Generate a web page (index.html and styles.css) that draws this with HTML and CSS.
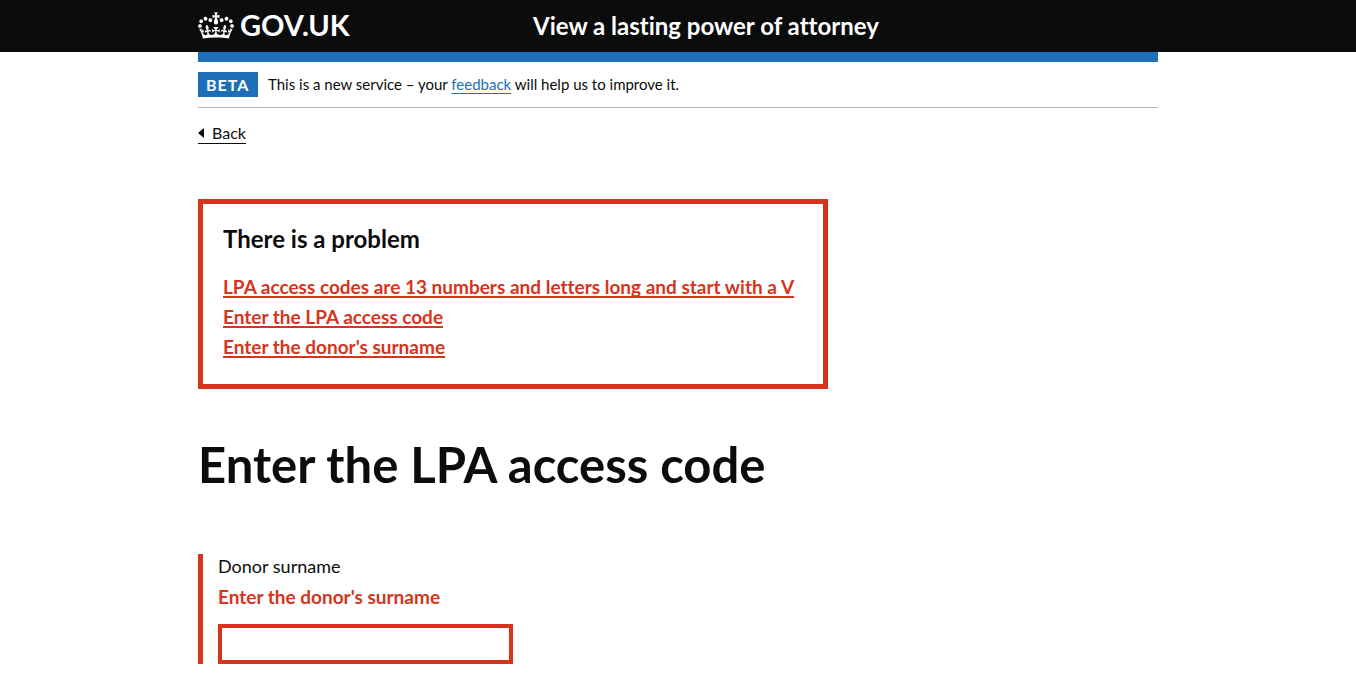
FILE: index.html
```
<!DOCTYPE html>
<html lang="en">
<head>
<meta charset="utf-8">
<meta name="viewport" content="width=device-width, initial-scale=1">
<title>Enter the LPA access code - View a lasting power of attorney</title>
<link rel="stylesheet" href="styles.css">
</head>
<body>
<header class="header">
  <div class="container header-row">
    <a class="logo" href="#">
      <svg class="crown" viewBox="0 0 132 97" width="36" height="27" aria-hidden="true"><path fill="currentColor" fill-rule="evenodd" d="M25 30.2c3.5 1.5 7.7-.2 9.1-3.7 1.5-3.6-.2-7.8-3.9-9.2-3.6-1.4-7.6.3-9.1 3.9-1.4 3.5.3 7.5 3.9 9zM9 39.5c3.6 1.5 7.8-.2 9.2-3.7 1.5-3.6-.2-7.8-3.9-9.1-3.6-1.5-7.6.2-9.1 3.8-1.4 3.5.3 7.5 3.8 9zM4.4 57.2c3.5 1.5 7.7-.2 9.1-3.8 1.5-3.6-.2-7.7-3.9-9.1-3.5-1.5-7.6.3-9.1 3.8-1.4 3.5.3 7.6 3.9 9.1zm38.3-21.4c3.5 1.5 7.7-.2 9.1-3.8 1.5-3.6-.2-7.7-3.9-9.1-3.6-1.5-7.6.3-9.1 3.8-1.3 3.6.4 7.7 3.9 9.1zm64.4-5.6c-3.6 1.5-7.8-.2-9.1-3.7-1.5-3.6.2-7.8 3.8-9.2 3.6-1.4 7.7.3 9.2 3.9 1.3 3.5-.4 7.5-3.9 9zm15.9 9.3c-3.6 1.5-7.7-.2-9.1-3.7-1.5-3.6.2-7.8 3.7-9.1 3.6-1.5 7.7.2 9.2 3.8 1.5 3.5-.3 7.5-3.8 9zm4.7 17.7c-3.6 1.5-7.8-.2-9.2-3.8-1.5-3.6.2-7.7 3.9-9.1 3.6-1.5 7.7.3 9.2 3.8 1.3 3.5-.4 7.6-3.9 9.1zM89.3 35.8c-3.6 1.5-7.8-.2-9.2-3.8-1.4-3.6.2-7.7 3.9-9.1 3.6-1.5 7.7.3 9.2 3.8 1.4 3.6-.3 7.7-3.9 9.1zM69.7 17.7l8.9 4.7V9.3l-8.9 2.8c-.2-.3-.5-.6-.9-.9L72.4 0H59.6l3.5 11.2c-.3.3-.6.5-.9.9l-8.8-2.8v13.1l8.8-4.7c.3.3.6.7.9.9l-5 15.4v.1c-.2.8-.4 1.6-.4 2.4 0 4.1 3.1 7.5 7 8.1h.2c.3 0 .7.1 1 .1.4 0 .7 0 1-.1h.2c4-.6 7.1-4.1 7.1-8.1 0-.8-.1-1.7-.4-2.4V34l-5.1-15.4c.4-.2.7-.6 1-.9zM66 92.8c16.9 0 32.8 1.1 47.1 3.2 4-16.9 8.9-26.7 14-33.5l-9.6-3.4c1 4.9 1.1 7.2 0 10.2-1.5-1.4-3-4.3-4.2-8.7L108.6 76c2.8-2 5-3.2 7.5-3.3-4.4 9.4-10 11.9-13.6 11.2-4.3-.8-6.3-4.6-5.6-7.9 1-4.7 5.7-5.9 8-.5 4.3-8.7-3-11.4-7.6-8.8 7.1-7.2 7.9-13.5 2.1-21.1-8 6.1-8.1 12.3-4.5 20.8-4.7-5.4-12.1-2.5-9.5 6.2 3.4-5.2 7.9-2 7.2 3.1-.6 4.3-6.4 7.8-13.5 7.2-10.3-.9-10.9-8-11.2-13.8 2.5-.5 7.1 1.8 11 7.3L80.2 60c-4.1 4.4-8 5.3-12.3 5.4 1.4-4.4 8-11.6 8-11.6H55.5s6.4 7.2 7.9 11.6c-4.2-.1-8-1-12.3-5.4l1.4 16.4c3.9-5.5 8.5-7.7 10.9-7.3-.3 5.8-.9 12.8-11.1 13.8-7.2.6-12.9-2.9-13.5-7.2-.7-5 3.8-8.3 7.1-3.1 2.7-8.7-4.6-11.6-9.4-6.2 3.7-8.5 3.6-14.7-4.6-20.8-5.8 7.6-5 13.9 2.2 21.1-4.7-2.6-11.9.1-7.7 8.8 2.3-5.5 7.1-4.2 8.1.5.7 3.3-1.3 7.1-5.7 7.9-3.5.7-9-1.8-13.5-11.2 2.5.1 4.7 1.3 7.5 3.3l-4.7-15.4c-1.2 4.4-2.7 7.2-4.3 8.7-1.1-3-.9-5.3 0-10.2l-9.5 3.4c5 6.9 9.9 16.7 14 33.5 14.8-2.1 30.8-3.2 47.7-3.2z"/></svg>
      <span>GOV.UK</span>
    </a>
    <a class="service-name" href="#">View a lasting power of attorney</a>
  </div>
</header>
<div class="container">
  <div class="phase-banner">
    <strong class="tag">BETA</strong>
    <span class="phase-text">This is a new service – your <a class="link" href="#">feedback</a> will help us to improve it.</span>
  </div>
  <a class="back-link" href="#">Back</a>
  <main class="main">
    <section class="error-summary" role="alert" aria-labelledby="error-title">
      <h2 class="error-title" id="error-title">There is a problem</h2>
      <ul class="error-list">
        <li><a href="#page-title">LPA access codes are 13 numbers and letters long and start with a V</a></li>
        <li><a href="#page-title">Enter the LPA access code</a></li>
        <li><a href="#surname">Enter the donor's surname</a></li>
      </ul>
    </section>
    <h1 class="title" id="page-title">Enter the LPA access code</h1>
    <form class="form-group">
      <label class="label" for="surname">Donor surname</label>
      <span class="error-message" id="surname-error">Enter the donor's surname</span>
      <input class="input" id="surname" name="surname" type="text" aria-describedby="surname-error">
    </form>
  </main>
</div>
</body>
</html>
```

FILE: styles.css
```
* { box-sizing: border-box; }

body {
  margin: 0;
  color: #0b0c0c;
  background: #fff;
  font-family: Lato, "Liberation Sans", sans-serif;
  font-size: 19px;
  font-variant-ligatures: none;
  line-height: 25px;
}

.container {
  max-width: 960px;
  margin: 0 auto;
}

.header {
  height: 52px;
  background: #0b0c0c;
  color: #fff;
}

.header a {
  color: inherit;
  text-decoration: none;
  font-weight: 700;
}

.header-row {
  display: grid;
  grid-template-columns: 335px 1fr;
  align-items: center;
  height: 62px;
  padding-bottom: 2px;
  border-bottom: 10px solid #1d70b8;
  background: #0b0c0c;
}

.logo {
  display: flex;
  align-items: center;
  gap: 6px;
  font-size: 29px;
  line-height: 30px;
}

.service-name { font-size: 24px; }

.phase-banner {
  display: flex;
  align-items: center;
  gap: 10px;
  margin-top: 10px;
  padding: 10px 0;
  border-bottom: 1px solid #b1b4b6;
}

.tag {
  min-width: 60px;
  padding: 0 8px;
  background: #1d70b8;
  color: #fff;
  font-size: 16px;
  letter-spacing: 1px;
}

.phase-text { font-size: 15px; }

.link {
  color: #1d70b8;
  text-underline-offset: 3px;
}

.back-link {
  display: inline-flex;
  align-items: center;
  gap: 8px;
  margin-top: 16px;
  padding-bottom: 2px;
  border-bottom: 1px solid #0b0c0c;
  color: #0b0c0c;
  font-size: 16px;
  line-height: 17px;
  text-decoration: none;
}

.back-link::before {
  content: "";
  border: solid transparent;
  border-width: 5px 6px 5px 0;
  border-right-color: #0b0c0c;
}

.main {
  max-width: 630px;
  padding-top: 55px;
}

.error-summary {
  padding: 20px;
  border: 5px solid #d4351c;
}

.error-title {
  margin: 0 0 20px;
  font-size: 24px;
  line-height: 30px;
}

.error-list {
  display: grid;
  gap: 5px;
  margin: 0;
  padding: 0 0 5px;
  list-style: none;
}

.error-list a,
.error-message {
  color: #d4351c;
  font-weight: 700;
}

.error-list a {
  text-decoration-thickness: 2px;
  text-underline-offset: 2px;
  text-decoration-skip-ink: none;
}

.title {
  margin: 50px 0 65px;
  font-size: 49px;
  line-height: 50px;
}

.form-group {
  margin: 0 0 30px;
  padding-left: 15px;
  border-left: 5px solid #d4351c;
}

.label {
  display: block;
  margin-bottom: 5px;
  font-size: 18px;
}

.error-message {
  display: block;
  margin-bottom: 15px;
}

.input {
  display: block;
  width: 100%;
  max-width: 295px;
  height: 40px;
  padding: 5px;
  border: 4px solid #d4351c;
  border-radius: 0;
  font: inherit;
}
```
